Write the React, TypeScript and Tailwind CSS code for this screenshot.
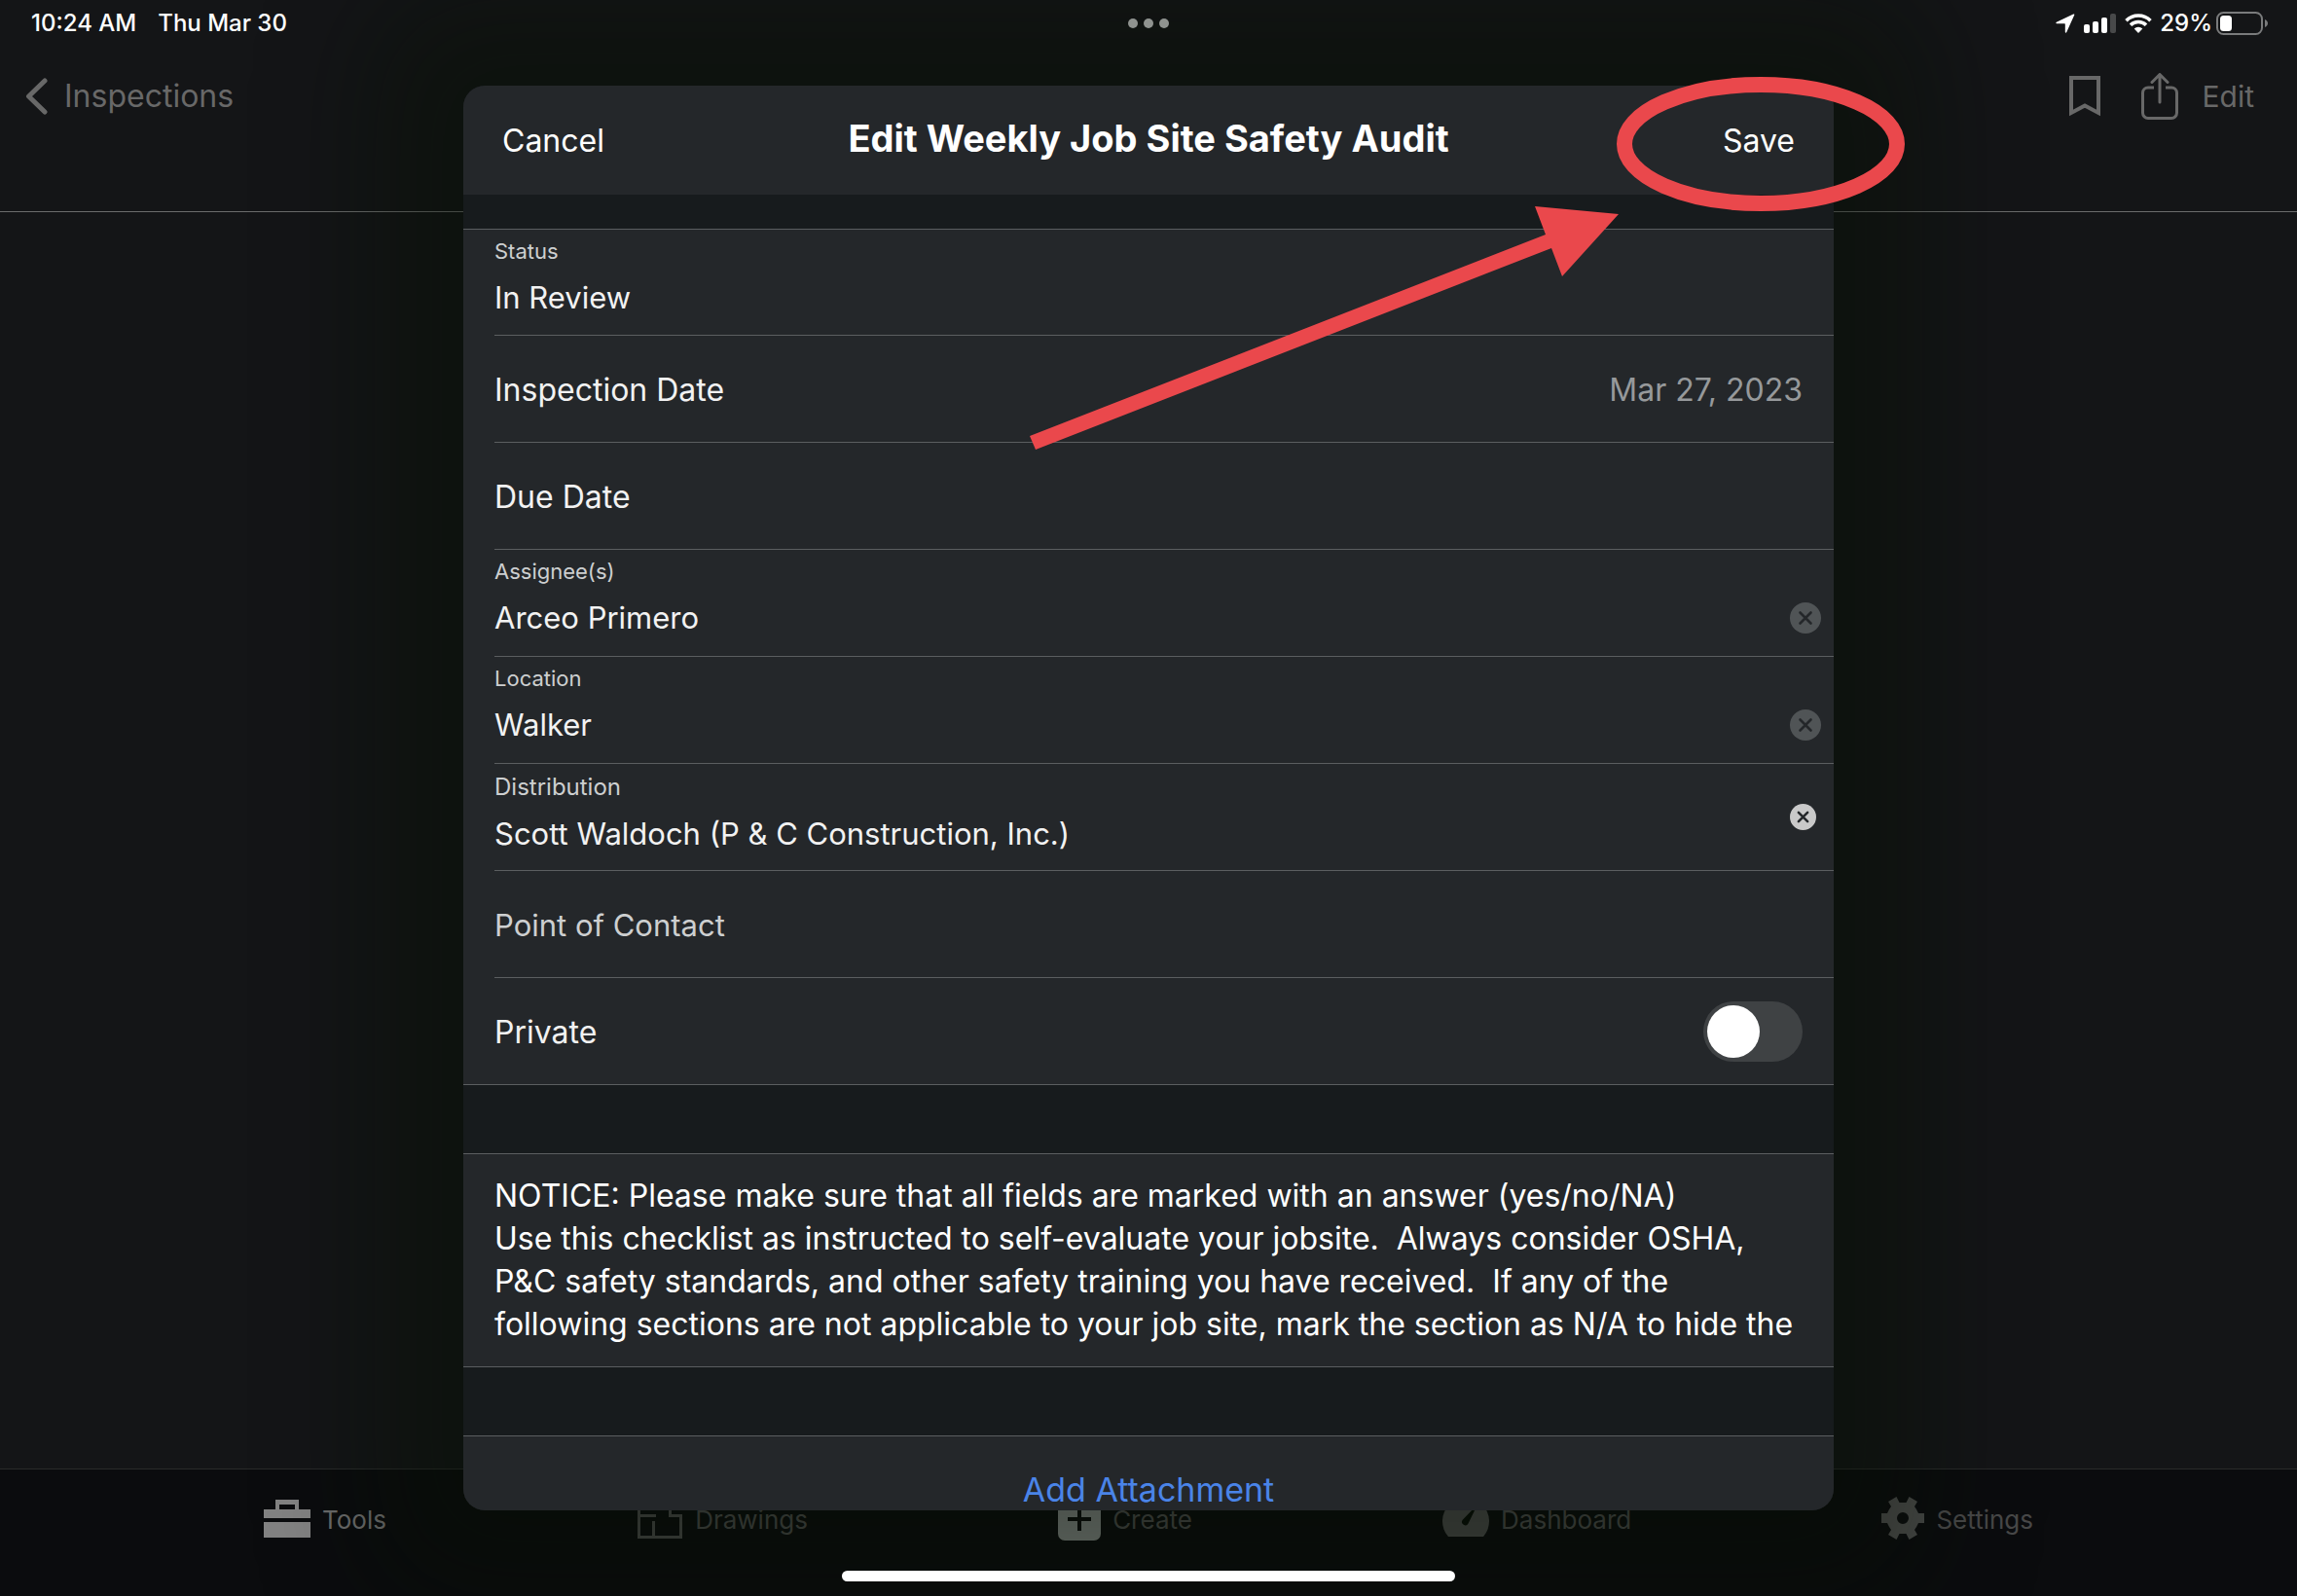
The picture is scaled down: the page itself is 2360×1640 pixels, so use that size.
import { useState } from "react";
import type { ReactNode } from "react";

function StatusBar() {
  return (
    <div className="relative z-30 flex h-12 items-center justify-between pl-8 pr-[29px] text-[24px] font-medium leading-7 text-white">
      <div className="flex gap-[22px]">
        <span>10:24 AM</span>
        <span>Thu Mar 30</span>
      </div>
      <div className="flex items-center">
        <svg className="mr-[9px] h-5 w-5" viewBox="0 0 20 20" fill="#fff" aria-hidden="true">
          <path d="M18.2.6c.8-.4 1.4.2 1 1L11.300 19.100c-.4.8-1.500.7-1.500-.3V10.800a.6.6 0 0 0-.6-.6H1.200c-1 0-1.200-1.100-.3-1.500z" />
        </svg>
        <svg className="mr-2 h-5 w-[34px]" viewBox="0 0 34 20" fill="#fff" aria-hidden="true">
          <rect x="0" y="11" width="6" height="9" rx="2" />
          <rect x="9" y="8" width="6" height="12" rx="2" />
          <rect x="18" y="4" width="6" height="16" rx="2" />
          <rect x="27" y="0" width="6" height="20" rx="2" fill="#48494a" />
        </svg>
        <svg className="mr-2 h-5 w-7" viewBox="0 0 28 20" fill="none" stroke="#fff" strokeWidth="3.600" aria-hidden="true">
          <path d="M1.500 7.200a17.800 17.800 0 0 1 25 0" />
          <path d="M6 11.800a11.500 11.500 0 0 1 16 0" />
          <path d="M14 20l-4.300-4.400a6.200 6.200 0 0 1 8.600 0z" fill="#fff" stroke="none" />
        </svg>
        <span>29%</span>
        <svg className="ml-1 h-6 w-[54px]" viewBox="0 0 54 24" fill="none" aria-hidden="true">
          <rect x="1" y="1" width="46" height="22" rx="6.500" stroke="#7a7b7c" strokeWidth="2" />
          <rect x="4" y="4" width="12" height="16" rx="3.500" fill="#fff" />
          <path d="M50 8c4 1.500 4 6.500 0 8z" fill="#7a7b7c" />
        </svg>
      </div>
    </div>
  );
}

function NavBar() {
  return (
    <header className="flex h-[170px] items-start justify-between border-b border-[#6a6b6b] pl-[26px] pr-11 pt-[27px] text-[#686868]">
      <button type="button" className="flex h-12 items-center gap-4 text-[32px] leading-10">
        <svg className="h-10 w-6" viewBox="0 0 24 40" fill="none" stroke="currentColor" strokeWidth="5" strokeLinecap="round" strokeLinejoin="round" aria-hidden="true">
          <path d="M20 4L3.500 20L20 36" />
        </svg>
        Inspections
      </button>
      <div className="flex h-12 items-center text-[30px] leading-10">
        <button type="button" aria-label="Bookmark" className="mr-[42px]">
          <svg className="h-[42px] w-8" viewBox="0 0 32 42" fill="none" stroke="currentColor" strokeWidth="4" aria-hidden="true">
            <path d="M2 2H30V38L16 30.500L2 38Z" />
          </svg>
        </button>
        <button type="button" aria-label="Share" className="mr-[25px]">
          <svg className="h-12 w-[38px]" viewBox="0 0 38 48" fill="none" stroke="currentColor" strokeWidth="3" strokeLinecap="round" aria-hidden="true">
            <path strokeLinecap="butt" d="M13 15H7a5.500 5.500 0 0 0-5.500 5.500V41a5.500 5.500 0 0 0 5.500 5.500H31a5.500 5.500 0 0 0 5.500-5.500V20.500A5.500 5.500 0 0 0 31 15H25" />
            <path d="M19 30V1.500M11 9.500L19 1.500L27 9.500" strokeLinejoin="round" />
          </svg>
        </button>
        <button type="button">Edit</button>
      </div>
    </header>
  );
}

function Tab({ label, tone, children }: { label: string; tone: string; children: ReactNode }) {
  return (
    <button type="button" className={`flex items-center gap-3 text-[26px] leading-8 ${tone}`}>
      {children}
      <span className="pt-1">{label}</span>
    </button>
  );
}

function TabBar() {
  return (
    <nav className="flex h-[131px] items-start justify-between border-t border-[#2a2b2b] bg-[#0b0c0e] px-[271px] pt-[26px]">
      <Tab label="Tools" tone="text-[#6c6c6c]">
        <svg className="h-12 w-12" viewBox="0 0 48 48" fill="#838383" aria-hidden="true">
          <path fillRule="evenodd" d="M12 5H36V15H48V24H0V15H12ZM16 10V15H32V10Z" />
          <path d="M0 28H48V44H0Z" />
        </svg>
      </Tab>
      <Tab label="Drawings" tone="text-[#484848]">
        <svg className="h-12 w-12" viewBox="0 0 48 48" fill="none" stroke="currentColor" strokeWidth="3" aria-hidden="true">
          <path d="M20 21.500H2.500V3.500H34.500V21.500H45.500V43.500H2.500V21M17.500 27V43" />
        </svg>
      </Tab>
      <Tab label="Create" tone="text-[#484848]">
        <svg className="h-12 w-11" viewBox="0 0 44 48" fill="#7b7f7d" aria-hidden="true">
          <path fillRule="evenodd" d="M7 2H37a7 7 0 0 1 7 7V40a7 7 0 0 1-7 7H7a7 7 0 0 1-7-7V9a7 7 0 0 1 7-7ZM20 13V23H10V27H20V37H24V27H34V23H24V13Z" />
        </svg>
      </Tab>
      <Tab label="Dashboard" tone="text-[#484848]">
        <svg className="h-12 w-12" viewBox="0 0 48 48" aria-hidden="true">
          <path fill="currentColor" d="M6 43A24 24 0 1 1 42 43Z" />
          <path fill="#080d08" d="M36 10L26.500 29.500a3.400 3.400 0 0 1-6-3.400Z" />
        </svg>
      </Tab>
      <Tab label="Settings" tone="text-[#484848]">
        <svg className="h-12 w-11" viewBox="-22 -24 44 48" fill="#484948" aria-hidden="true">
          <path
            fillRule="evenodd"
            d="M16-5H22V5H16L14 9L12 12L15 17L6.500 22L3.500 16H-3.500L-6.500 22L-15 17L-12 12L-14 9L-16 5H-22V-5H-16L-14-9L-12-12L-15-17L-6.500-22L-3.500-16H3.500L6.500-22L15-17L12-12L14-9ZM0-6A6 6 0 1 0 0 6A6 6 0 1 0 0-6Z"
          />
        </svg>
      </Tab>
    </nav>
  );
}

function ClearButton({ label, bright = false }: { label: string; bright?: boolean }) {
  return (
    <button type="button" aria-label={`Clear ${label}`} className={bright ? "mr-[18px] shrink-0" : "mr-[13px] shrink-0"}>
      <svg className={bright ? "size-[27px]" : "size-8"} viewBox="0 0 32 32" aria-hidden="true">
        <circle cx="16" cy="16" r="16" fill={bright ? "#c9c9c9" : "#505456"} />
        <path d="M10.500 10.500L21.500 21.500M21.500 10.500L10.500 21.500" stroke="#24272a" strokeWidth={bright ? 3 : 2.6} strokeLinecap="round" />
      </svg>
    </button>
  );
}

const ROW = "ml-8 flex h-[110px] border-b border-[#5b5e60] first:h-[109px] last:ml-0 last:pl-8";

function LabeledRow({ id, label, value, large = false, children }: { id: string; label: string; value: string; large?: boolean; children?: ReactNode }) {
  return (
    <div className={ROW}>
      <div className="flex flex-1 flex-col pt-2">
        <label htmlFor={id} className={`leading-7 text-[#cdcfd0] ${large ? "pt-[2px] text-[24px]" : "text-[22px]"}`}>{label}</label>
        <input id={id} readOnly defaultValue={value} className="mt-3 h-11 w-full bg-transparent text-[31px] leading-[44px] text-[#f2f2f2] outline-none" />
      </div>
      {children}
    </div>
  );
}

function AuditDialog() {
  const [isPrivate, setPrivate] = useState(false);
  return (
    <section
      role="dialog"
      aria-labelledby="dialog-title"
      className="flex h-full w-full flex-col overflow-hidden rounded-[22px] bg-[#171b1d] shadow-[0_0_120px_90px_rgba(5,15,0,0.4)]"
    >
      <header className="grid h-28 shrink-0 grid-cols-[1fr_auto_1fr] items-center bg-[#24272a] px-10 text-white">
        <button type="button" className="justify-self-start pt-[2px] text-[32px] leading-10">Cancel</button>
        <h1 id="dialog-title" className="pb-1 text-[38px] font-bold leading-[44px]">Edit Weekly Job Site Safety Audit</h1>
        <button type="button" className="justify-self-end pt-[2px] text-[32px] leading-10">Save</button>
      </header>
      <form className="mt-[35px] shrink-0 border-t border-[#5b5e60] bg-[#24272a] text-[32px] leading-[44px] text-[#f2f2f2]">
        <LabeledRow id="status" label="Status" value="In Review" />
        <div className={`${ROW} items-center justify-between pr-8 pt-[3px]`}>
          <span>Inspection Date</span>
          <button type="button" aria-label="Inspection Date" className="text-[#96999b]">Mar 27, 2023</button>
        </div>
        <div className={`${ROW} items-center pt-[3px]`}>
          <button type="button">Due Date</button>
        </div>
        <LabeledRow id="assignees" label="Assignee(s)" value="Arceo Primero">
          <div className="flex items-center pt-[30px]"><ClearButton label="assignees" /></div>
        </LabeledRow>
        <LabeledRow id="location" label="Location" value="Walker">
          <div className="flex items-center pt-[30px]"><ClearButton label="location" /></div>
        </LabeledRow>
        <LabeledRow id="distribution" label="Distribution" value="Scott Waldoch (P & C Construction, Inc.)" large>
          <div className="flex items-center"><ClearButton label="distribution" bright /></div>
        </LabeledRow>
        <div className={`${ROW} items-center pt-[2px]`}>
          <input aria-label="Point of Contact" placeholder="Point of Contact" className="h-11 w-full bg-transparent text-[31px] outline-none placeholder:text-[#cdcfd0]" />
        </div>
        <div className={`${ROW} items-center justify-between pr-8`}>
          <label htmlFor="private" className="pt-[3px]">Private</label>
          <span className="relative flex h-[62px] w-[102px] items-center rounded-full bg-[#3f4244] p-1 has-checked:justify-end has-checked:bg-green-500">
            <input
              id="private"
              type="checkbox"
              role="switch"
              checked={isPrivate}
              onChange={(e) => setPrivate(e.target.checked)}
              className="absolute inset-0 size-full cursor-pointer appearance-none rounded-full"
            />
            <span className="pointer-events-none size-[54px] rounded-full bg-white" />
          </span>
        </div>
      </form>
      <p className="mt-[70px] shrink-0 border-y border-[#5b5e60] bg-[#24272a] px-8 py-[21px] text-[32px] leading-[44px] text-white">
        NOTICE: Please make sure that all fields are marked with an answer (yes/no/NA)
        <br />
        Use this checklist as instructed to self-evaluate your jobsite.&nbsp; Always consider OSHA,
        <br />
        P&amp;C safety standards, and other safety training you have received.&nbsp; If any of the
        <br />
        following sections are not applicable to your job site, mark the section as N/A to hide the
      </p>
      <button type="button" className="mt-[70px] h-[110px] shrink-0 border-t border-[#5b5e60] bg-[#24272a] text-[34px] leading-[44px] text-[#4a84e8]">
        Add Attachment
      </button>
    </section>
  );
}

function Callout() {
  return (
    <svg className="pointer-events-none absolute -right-[86px] -top-[18px] h-[400px] w-[930px]" viewBox="1040 70 930 400" aria-hidden="true">
      <ellipse cx="1809" cy="148" rx="140" ry="61" fill="none" stroke="#ea484c" strokeWidth="16" />
      <path fill="#ea484c" d="M1663 220L1605 284L1594 255L1064 462L1058 448L1588 241L1577 212Z" />
    </svg>
  );
}

export default function App() {
  return (
    <div className="relative flex h-screen flex-col overflow-hidden bg-[#141517] font-['Inter',sans-serif]">
      <StatusBar />
      <NavBar />
      <main className="flex-1" />
      <TabBar />
      <div className="absolute inset-0 z-10 flex justify-center py-[88px]">
        <div className="relative w-full max-w-[1408px]">
          <AuditDialog />
          <Callout />
        </div>
      </div>
      <div className="absolute inset-x-0 top-[19px] z-30 flex justify-center gap-[6px]">
        <span className="size-[10px] rounded-full bg-[#8f938f]" />
        <span className="size-[10px] rounded-full bg-[#8f938f]" />
        <span className="size-[10px] rounded-full bg-[#8f938f]" />
      </div>
      <div className="absolute inset-x-0 bottom-[15px] z-30 flex justify-center">
        <span className="h-[11px] w-[630px] rounded-full bg-white" />
      </div>
    </div>
  );
}
